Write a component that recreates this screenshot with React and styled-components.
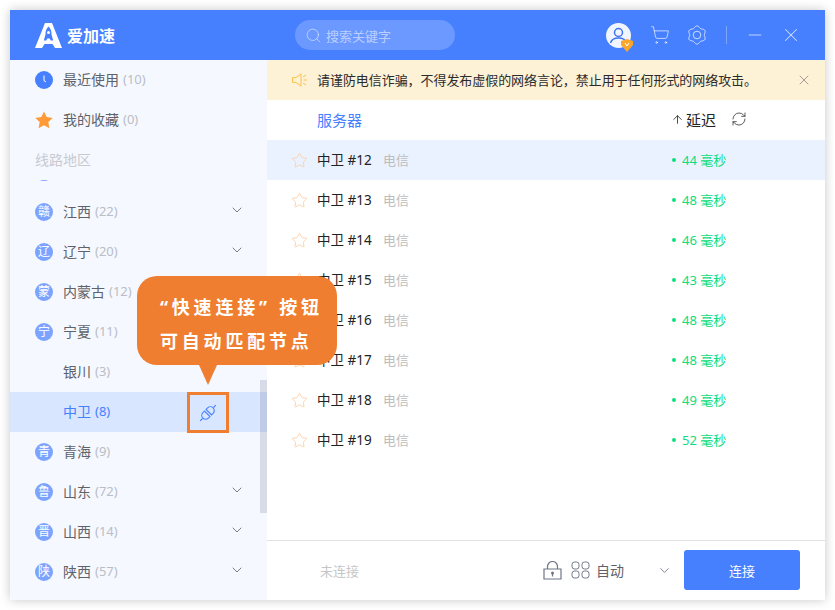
import styled, { createGlobalStyle } from "styled-components";
import { ArrowUp, ChevronDown, Minus, RefreshCw, Search, ShoppingCart, Star, X } from "lucide-react";

const GlobalStyle = createGlobalStyle`
  html, body {
    margin: 0;
    padding: 0;
    background: #fff;
    font-family: "Noto Sans", "Noto Sans CJK SC", sans-serif;
  }
`;

const Window = styled.div`
  position: relative;
  width: 815px;
  height: 590px;
  margin: 10px;
  display: flex;
  flex-direction: column;
  background: #fff;
  box-shadow: 0 0 10px rgba(0, 0, 0, 0.22);
  overflow: hidden;
`;

// 상단 바
const Header = styled.header`
  flex: none;
  height: 50px;
  display: flex;
  align-items: center;
  background: #4680ff;
  color: #fff;
  padding-left: 25px;
`;
const Logo = styled.div`
  width: 260px;
  display: flex;
  align-items: center;
  gap: 5px;
  font-size: 16px;
  font-weight: 700;
`;
const SearchBox = styled.div`
  width: 160px;
  height: 30px;
  border-radius: 15px;
  background: rgba(255, 255, 255, 0.2);
  display: flex;
  align-items: center;
  gap: 4px;
  padding-left: 10px;
  box-sizing: border-box;
  font-size: 13px;
  color: rgba(255, 255, 255, 0.55);
`;
const HeaderIcons = styled.div`
  margin-left: auto;
  display: flex;
  align-items: center;
  color: rgba(255, 255, 255, 0.72);
  padding-right: 23px;
`;
const Avatar = styled.div`
  position: relative;
  width: 25px;
  height: 25px;
  margin-right: 19px;
`;
const Badge = styled.svg`
  position: absolute;
  right: -3px;
  bottom: -4px;
`;
const HeaderDivider = styled.div`
  width: 1px;
  height: 18px;
  background: rgba(255, 255, 255, 0.3);
  margin: 0 18px 0 19px;
`;

const Body = styled.div`
  flex: 1;
  display: flex;
  min-height: 0;
`;

// 사이드바
const Sidebar = styled.aside`
  flex: none;
  width: 257px;
  background: #f5f8ff;
  display: flex;
  flex-direction: column;
`;
const Row = styled.div`
  height: 40px;
  flex: none;
  box-sizing: border-box;
  display: flex;
  align-items: center;
  padding: 0 0 2px 25px;
  font-size: 14px;
  color: ${(p) => (p.$active ? "#4680ff" : "#5f6268")};
  background: ${(p) => (p.$active ? "#d9e6ff" : "transparent")};
`;
const SubLabel = styled.span`
  margin-left: 28px;
`;
const IconSlot = styled.span`
  width: 18px;
  height: 18px;
  margin: 2px 10px 0 0;
  display: flex;
`;
const Count = styled.span`
  margin-left: 4px;
  color: ${(p) => (p.$active ? "#4680ff" : "#b9bdc6")};
  font-size: 13px;
`;
const SectionTitle = styled.div`
  height: 40px;
  flex: none;
  box-sizing: border-box;
  display: flex;
  align-items: center;
  padding: 0 0 2px 25px;
  font-size: 14px;
  color: #c8cad0;
`;
const RegionScroll = styled.div`
  flex: 1;
  overflow: hidden;
  min-height: 0;
`;
const RegionList = styled.div`
  margin-top: -28px;
  display: flex;
  flex-direction: column;
`;
const RegionBadge = styled.span`
  width: 18px;
  height: 18px;
  margin: 2px 10px 0 0;
  flex: none;
  border-radius: 50%;
  background: #7ca4ff;
  color: #fff;
  font-size: 12px;
  line-height: 18px;
  text-align: center;
`;
const RowChevron = styled(ChevronDown)`
  margin-left: auto;
  margin-right: 22px;
  margin-top: -2px;
  color: #6b7280;
`;

const ScrollThumb = styled.div`
  position: absolute;
  left: 250px;
  top: 370px;
  width: 7px;
  height: 133px;
  background: rgba(70, 80, 110, 0.17);
`;

// 오른쪽 목록
const Main = styled.main`
  flex: 1;
  min-width: 0;
  display: flex;
  flex-direction: column;
`;
const Notice = styled.div`
  height: 40px;
  flex: none;
  box-sizing: border-box;
  background: #fdf1d6;
  display: flex;
  align-items: center;
  padding: 0 0 2px 25px;
  font-size: 13px;
  letter-spacing: -0.06px;
  color: #2b2b2b;
`;
const NoticeClose = styled(X)`
  margin: 2px 13px 0 auto;
  color: #8a8a8a;
`;
const TableHead = styled.div`
  height: 40px;
  flex: none;
  box-sizing: border-box;
  display: flex;
  align-items: center;
  padding: 0 0 2px 50px;
  font-size: 15px;
`;
const HeadServer = styled.span`
  color: #4680ff;
  width: 354px;
`;
const HeadDelay = styled.span`
  display: flex;
  align-items: center;
  color: #222;
  gap: 2px;
`;
const Refresh = styled(RefreshCw)`
  margin-left: 15px;
  color: #444;
`;
const ServerRow = styled.div`
  height: 40px;
  flex: none;
  box-sizing: border-box;
  display: flex;
  align-items: center;
  padding: 0 0 2px 24px;
  font-size: 13px;
  background: ${(p) => (p.$active ? "#ebf2ff" : "transparent")};
`;
const FavStar = styled(Star)`
  color: #fbcda0;
  margin: 2px 9px 0 0;
`;
const ServerName = styled.span`
  width: 66px;
  color: #222;
  font-size: 13.5px;
`;
const Carrier = styled.span`
  width: 289px;
  color: #bdbdbd;
`;
const Latency = styled.span`
  color: #10dc80;
  font-size: 13px;
  display: flex;
  align-items: center;
  gap: 6px;
  margin-top: 1px;
`;
const Dot = styled.i`
  width: 4px;
  height: 4px;
  border-radius: 50%;
  background: #10dc80;
`;
const Footer = styled.footer`
  margin-top: auto;
  height: 60px;
  flex: none;
  box-sizing: border-box;
  border-top: 1px solid #e2e2e2;
  display: flex;
  align-items: center;
  padding: 0 0 1px 53px;
  font-size: 13px;
`;
const Status = styled.span`
  width: 223px;
  color: #c6c6c6;
`;
const ModeIcons = styled.div`
  display: flex;
  align-items: center;
  gap: 9px;
`;
const ModeText = styled.span`
  color: #5f6268;
  font-size: 14px;
  margin-left: -3px;
  width: 63px;
`;
const ModeChevron = styled(ChevronDown)`
  color: #6f7686;
  margin-left: -2px;
`;
const ConnectButton = styled.button`
  width: 116px;
  height: 40px;
  margin-left: 12px;
  border: 0;
  border-radius: 3px;
  background: #4680ff;
  color: #fff;
  font: inherit;
  font-size: 13px;
`;

// 안내 말풍선
const Callout = styled.div`
  position: absolute;
  left: 127px;
  top: 266px;
  width: 200px;
  height: 89px;
  box-sizing: border-box;
  padding: 14px 0 0 23px;
  border-radius: 20px;
  background: #ef7e31;
  color: #fff;
  font-size: 18px;
  font-weight: 700;
  line-height: 34px;
  letter-spacing: 3.8px;
  white-space: nowrap;
  &::after {
    content: "";
    position: absolute;
    left: 62px;
    top: 89px;
    border-left: 9px solid transparent;
    border-right: 9px solid transparent;
    border-top: 20px solid #ef7e31;
  }
`;
const Marker = styled.div`
  position: absolute;
  left: 177px;
  top: 382px;
  width: 42px;
  height: 41px;
  box-sizing: border-box;
  border: 3px solid #ef7e31;
  display: flex;
  align-items: center;
  justify-content: center;
`;

const LogoMark = () => (
  <svg width="27" height="26" viewBox="0 0 27 26">
    <path fill="#fff" d="M10 1h7l10 25h-7l-2.500-4h-8L7 26H0z" />
    <path fill="#4680ff" d="M13.500 4.500c2.400 2 3.200 5 3 8l1.700 6h-2.500l-1-2h-2.400l-1 2H8.800l1.700-6c-.2-3 .6-6 3-8z" />
    <circle cx="13.500" cy="10.500" r="1.500" fill="#fff" />
  </svg>
);

const ClockIcon = () => (
  <svg width="18" height="18" viewBox="0 0 18 18">
    <circle cx="9" cy="9" r="9" fill="#4680ff" />
    <path d="M9 4.500v5.200l1.800 1" fill="none" stroke="#fff" strokeWidth="1" />
  </svg>
);

const SolidStar = () => (
  <svg width="18" height="18" viewBox="0 0 18 18">
    <path fill="#ff9a36" d="M9 .5l2.700 5.600 6 .8-4.400 4.200 1.100 6.100L9 14.300l-5.400 2.900 1.100-6.100L.3 6.900l6-.8z" />
  </svg>
);

const SpeakerIcon = () => (
  <svg width="16" height="14" viewBox="0 0 16 14" style={{ margin: "2px 9px 0 0" }}>
    <path fill="none" stroke="#fbc24c" strokeWidth="1" d="M.5 4.500h3.500L9 1v12L4 9.500H.5z" />
    <path fill="none" stroke="#fbc24c" strokeWidth="1" d="M11 4l3-2M11.500 7H15M11 10l3 2" />
  </svg>
);

const LinkIcon = () => (
  <svg width="20" height="20" viewBox="0 0 18 18" fill="none" stroke="#4680ff" strokeWidth="1">
    <g transform="rotate(-45 9 9)">
      <path d="M-1 9h3M16 9h3" />
      <path d="M8 5.500H6a3.500 3.500 0 0 0 0 7h2z" />
      <path d="M10 5.500h2a3.500 3.500 0 0 1 0 7h-2z" />
    </g>
  </svg>
);

const AvatarIcon = () => (
  <svg width="25" height="25" viewBox="0 0 25 25">
    <circle cx="12.500" cy="12.500" r="12.500" fill="#f1f5ff" />
    <circle cx="12.500" cy="9.500" r="4" fill="none" stroke="#3f74f0" strokeWidth="1.500" />
    <path d="M4.500 20c1-3.500 4-5 8-5s7 1.500 8 5" fill="none" stroke="#3f74f0" strokeWidth="1.500" />
  </svg>
);

// 꽃잎 모양 톱니
const gearPath = () => {
  const points = [];
  for (let i = 0; i < 96; i++) {
    const t = (i / 96) * Math.PI * 2;
    const r = 8.2 + 0.9 * Math.cos(6 * t);
    points.push(`${(10 + r * Math.sin(t)).toFixed(2)} ${(10 - r * Math.cos(t)).toFixed(2)}`);
  }
  return `M${points.join("L")}z`;
};

const GearIcon = () => (
  <svg width="20" height="20" viewBox="0 0 20 20" fill="none" stroke="currentColor" strokeWidth="1" style={{ marginLeft: 17 }}>
    <path d={gearPath()} />
    <circle cx="10" cy="10" r="3.800" />
  </svg>
);

const LockIcon = () => (
  <svg width="19" height="19" viewBox="0 0 19 19" fill="none" stroke="#6f7686" strokeWidth="1.200">
    <path d="M1 8h17v10H1z" />
    <path d="M4.500 8V5.500a5 5 0 0 1 10 0V8" />
    <circle cx="9.500" cy="12" r="1.500" fill="#6f7686" stroke="none" />
    <path d="M9.500 12v3.500" />
  </svg>
);

const ModeGrid = () => (
  <svg width="19" height="18" viewBox="0 0 19 18" fill="none" stroke="#6f7686" strokeWidth="1">
    <rect x="1" y="1" width="7" height="7" rx="2.500" />
    <rect x="11" y="1" width="7" height="7" rx="2.500" />
    <rect x="1" y="10" width="7" height="7" rx="2.500" />
    <rect x="11" y="10" width="7" height="7" rx="2.500" />
  </svg>
);

const regions = [
  { badge: "", name: "", hidden: true },
  { badge: "赣", name: "江西", count: 22, more: true },
  { badge: "辽", name: "辽宁", count: 20, more: true },
  { badge: "蒙", name: "内蒙古", count: 12, more: true },
  { badge: "宁", name: "宁夏", count: 11 },
  { name: "银川", count: 3, sub: true },
  { name: "中卫", count: 8, sub: true, active: true },
  { badge: "青", name: "青海", count: 9 },
  { badge: "鲁", name: "山东", count: 72, more: true },
  { badge: "晋", name: "山西", count: 14, more: true },
  { badge: "陕", name: "陕西", count: 57, more: true },
];

const servers = [
  { no: 12, ms: 44 },
  { no: 13, ms: 48 },
  { no: 14, ms: 46 },
  { no: 15, ms: 43 },
  { no: 16, ms: 48 },
  { no: 17, ms: 48 },
  { no: 18, ms: 49 },
  { no: 19, ms: 52 },
];

const App = () => {
  return (
    <>
      <GlobalStyle />
      <Window>
        <Header>
          <Logo>
            <LogoMark />
            爱加速
          </Logo>
          <SearchBox>
            <Search size={17} strokeWidth={1.3} />
            搜索关键字
          </SearchBox>
          <HeaderIcons>
            <Avatar>
              <AvatarIcon />
              <Badge width="14" height="14" viewBox="0 0 14 14">
                <path fill="#f9a72b" d="M1 3l6-2 6 2v4l-6 7-6-7z" />
                <path fill="none" stroke="#fff" strokeWidth="1" d="M5 5l2 3 2-3" />
              </Badge>
            </Avatar>
            <ShoppingCart size={20} strokeWidth={1.1} />
            <GearIcon />
            <HeaderDivider />
            <Minus size={20} strokeWidth={1.1} />
            <X size={22} strokeWidth={1.1} style={{ marginLeft: 15 }} />
          </HeaderIcons>
        </Header>
        <Body>
          <Sidebar>
            <Row>
              <IconSlot>
                <ClockIcon />
              </IconSlot>
              最近使用
              <Count>(10)</Count>
            </Row>
            <Row>
              <IconSlot>
                <SolidStar />
              </IconSlot>
              我的收藏
              <Count>(0)</Count>
            </Row>
            <SectionTitle>线路地区</SectionTitle>
            <RegionScroll>
              <RegionList>
                {regions.map((r, i) => (
                  <Row key={i} $active={r.active}>
                    {r.badge !== undefined && <RegionBadge>{r.badge}</RegionBadge>}
                    {r.sub ? <SubLabel>{r.name}</SubLabel> : r.name}
                    {!r.hidden && <Count $active={r.active}>({r.count})</Count>}
                    {r.more && <RowChevron size={16} strokeWidth={1.4} />}
                  </Row>
                ))}
              </RegionList>
            </RegionScroll>
          </Sidebar>
          <Main>
            <Notice>
              <SpeakerIcon />
              请谨防电信诈骗，不得发布虚假的网络言论，禁止用于任何形式的网络攻击。
              <NoticeClose size={16} strokeWidth={1.2} />
            </Notice>
            <TableHead>
              <HeadServer>服务器</HeadServer>
              <HeadDelay>
                <ArrowUp size={13} strokeWidth={1.5} />
                延迟
              </HeadDelay>
              <Refresh size={16} strokeWidth={1.3} />
            </TableHead>
            {servers.map((s, i) => (
              <ServerRow key={s.no} $active={i === 0}>
                <FavStar size={17} strokeWidth={1.2} />
                <ServerName>中卫 #{s.no}</ServerName>
                <Carrier>电信</Carrier>
                <Latency>
                  <Dot />
                  {s.ms} 毫秒
                </Latency>
              </ServerRow>
            ))}
            <Footer>
              <Status>未连接</Status>
              <ModeIcons>
                <LockIcon />
                <ModeGrid />
                <ModeText>自动</ModeText>
              </ModeIcons>
              <ModeChevron size={15} strokeWidth={1.4} />
              <ConnectButton>连接</ConnectButton>
            </Footer>
          </Main>
        </Body>
        <ScrollThumb />
        <Callout>
          “快速连接” 按钮
          <br />
          可自动匹配节点
        </Callout>
        <Marker>
          <LinkIcon />
        </Marker>
      </Window>
    </>
  );
};

export default App;
